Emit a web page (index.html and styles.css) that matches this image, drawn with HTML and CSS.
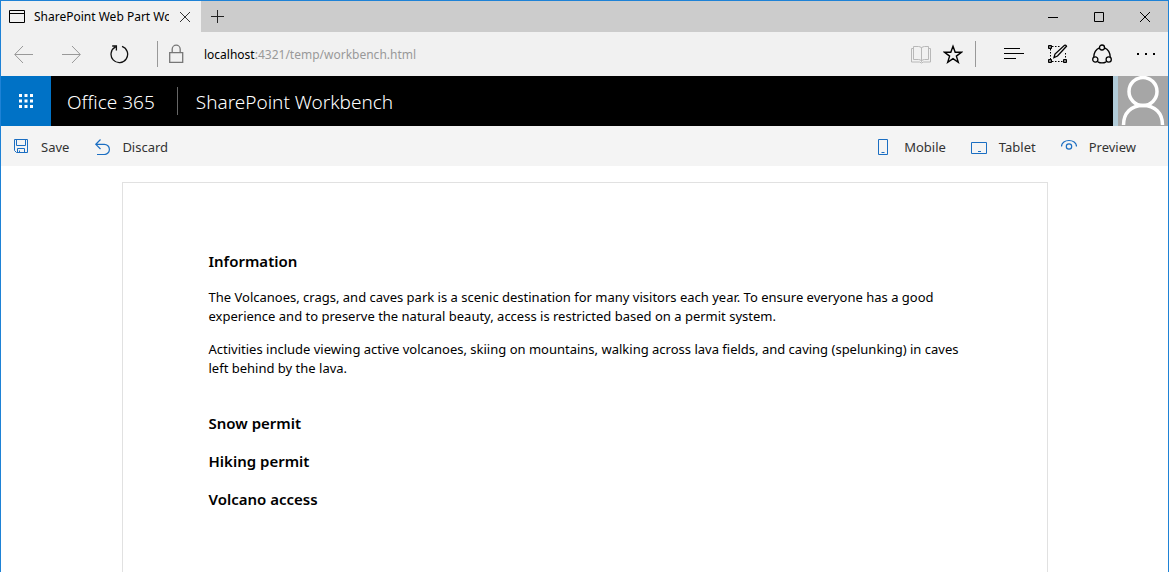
FILE: index.html
```html
<!DOCTYPE html>
<html lang="en">
<head>
<meta charset="utf-8">
<title>SharePoint Web Part Workbench</title>
<link rel="stylesheet" href="styles.css">
</head>
<body>
<div class="window">
  <div class="tabs">
    <div class="tab">
      <svg class="tab-icon" width="16" height="14" viewBox="0 0 16 14" fill="none" stroke="#000"><path d="M.5.5h15v12H.5zM.5 3.5h15"/></svg>
      <span class="tab-title">SharePoint Web Part Workbench</span>
      <button class="icon-button" aria-label="Close tab"><svg width="10" height="10" viewBox="0 0 10 10" fill="none" stroke="#333"><path d="M0 0l10 10M10 0L0 10"/></svg></button>
    </div>
    <button class="icon-button new-tab" aria-label="New tab"><svg width="13" height="13" viewBox="0 0 13 13" stroke="#222"><path d="M0 6.500h13M6.500 0v13"/></svg></button>
    <div class="window-controls">
      <button class="icon-button" aria-label="Minimize"><svg width="10" height="10" viewBox="0 0 10 10" stroke="#000"><path d="M0 5.500h10"/></svg></button>
      <button class="icon-button" aria-label="Maximize"><svg width="10" height="10" viewBox="0 0 10 10" fill="none" stroke="#000"><path d="M.5.5h9v9h-9z"/></svg></button>
      <button class="icon-button" aria-label="Close"><svg width="10" height="10" viewBox="0 0 10 10" stroke="#000"><path d="M0 0l10 10M10 0L0 10"/></svg></button>
    </div>
  </div>

  <div class="toolbar">
    <div class="nav">
      <button class="icon-button" aria-label="Back"><svg width="20" height="20" viewBox="0 0 20 20" fill="none" stroke="#999"><path d="M19 10.500H1M9 2L.700 10.500 9 19"/></svg></button>
      <button class="icon-button" aria-label="Forward"><svg width="20" height="20" viewBox="0 0 20 20" fill="none" stroke="#999"><path d="M0 10.500h18M10 2l8.300 8.500L10 19"/></svg></button>
      <button class="icon-button" aria-label="Refresh"><svg width="20" height="20" viewBox="0 0 20 20" fill="none" stroke="#111" stroke-width="1.300"><path d="M12 2.400a8.300 8.300 0 1 1-6.500.5M2.200 2h4.200v4.400"/></svg></button>
    </div>
    <span class="divider"></span>
    <svg class="lock" width="16" height="20" viewBox="0 0 16 20" fill="none" stroke="#777" stroke-width="1.300"><path d="M1.700 8.700h13v9.700h-13zM4.200 8.500V5.200a4 4 0 0 1 8 0v3.300"/></svg>
    <div class="address">localhost<span class="address-path">:4321/temp/workbench.html</span></div>
    <div class="page-tools">
      <button class="icon-button" aria-label="Reading view"><svg width="20" height="20" viewBox="0 0 20 20" fill="none" stroke="#b8b8b8"><path d="M10.500 3.500v14M2.500 2.500h5q3 0 3 2 0-2 3-2h4v13h-4q-3 0-3 2 0-2-3-2h-5zM2.500 4.500h-2v13.500h8l2 1 2-1h7V4.500h-2"/></svg></button>
      <button class="icon-button" aria-label="Add to favorites"><svg width="20" height="20" viewBox="0 0 20 20" fill="none" stroke="#000" stroke-width="1.400"><path d="M10 2.300l2.200 6h6.200l-5 3.800 1.900 6.200L10 14.600l-5.300 3.700 1.900-6.200-5-3.800h6.200z"/></svg></button>
    </div>
    <span class="divider"></span>
    <div class="browser-tools">
      <button class="icon-button" aria-label="Hub"><svg width="20" height="20" viewBox="0 0 20 20" stroke="#000"><path d="M0 4.500h16M0 9.500h20M0 14.500h12"/></svg></button>
      <button class="icon-button" aria-label="Make a web note"><svg width="20" height="20" viewBox="0 0 20 20" fill="none" stroke="#000"><path d="M4 2.500h9M2.500 5v11M4 17.500h12M17.500 9v7" stroke-dasharray="1.500 1.500"/><path d="M.5 1.500h3v3h-3zM.5 15.500h3v3h-3zM15.500 15.500h3v3h-3z" fill="#777"/><path d="M6 13.500l1-3.500 9.500-8.700q1.500-.5 2 1L9.500 12z" stroke-width="1.300"/></svg></button>
      <button class="icon-button" aria-label="Share"><svg width="20" height="20" viewBox="0 0 20 20" fill="none" stroke="#000" stroke-width="1.300"><circle cx="10" cy="3.500" r="2.500"/><circle cx="3.300" cy="15.500" r="2.600"/><circle cx="16.700" cy="15.500" r="2.600"/><path d="M7.500 3.800Q2 6 1.800 13M12.500 3.800Q18 6 18.200 13M5.800 17.800q4.200 2.200 8.400 0"/></svg></button>
      <button class="icon-button" aria-label="More"><svg width="20" height="20" viewBox="0 0 20 20"><path d="M1 9h2v2H1zM9 9h2v2H9zM17 9h2v2h-2z"/></svg></button>
    </div>
  </div>

  <header class="suite">
    <button class="launcher" aria-label="App launcher"><svg width="14" height="14" viewBox="0 0 14 14" fill="#fff"><path d="M0 0h3v3H0zM5.500 0h3v3h-3zM11 0h3v3h-3zM0 5.500h3v3H0zM5.500 5.500h3v3h-3zM11 5.500h3v3h-3zM0 11h3v3H0zM5.500 11h3v3h-3zM11 11h3v3h-3z"/></svg></button>
    <a class="brand" href="#">Office 365</a>
    <span class="app-name">SharePoint Workbench</span>
    <button class="avatar" aria-label="Account"><svg width="50" height="50" viewBox="0 0 50 50" fill="none" stroke="#fff" stroke-width="3.500"><circle cx="25" cy="15.500" r="14"/><path d="M5.500 49C5.500 37 13 29.500 25 29.500S44.500 37 44.500 49"/></svg></button>
  </header>

  <div class="commands">
    <button class="command"><svg width="16" height="16" viewBox="0 0 16 16" fill="none" stroke="#1b6ec2"><path d="M1.500.5h13v13H3.500l-2-2zM3.500.5v6h9v-6M4.500 13.500v-4h7v4M6.500 11.500v2"/></svg>Save</button>
    <button class="command"><svg width="16" height="16" viewBox="0 0 16 16" fill="none" stroke="#1b6ec2" stroke-width="1.200"><path d="M6.500.5L1.800 5.300 6.500 10M2 5.300h8.300a5 5 0 0 1 0 10.200H3"/></svg>Discard</button>
    <span class="spacer"></span>
    <button class="command"><svg width="16" height="16" viewBox="0 0 16 16" fill="none" stroke="#1b6ec2"><path d="M2.500.5h9v15h-9zM5.500 13.500h3"/></svg>Mobile</button>
    <button class="command"><svg width="16" height="16" viewBox="0 0 16 16" fill="none" stroke="#1b6ec2"><path d="M.5 3.500h15v11H.5zM7 12.500h3"/></svg>Tablet</button>
    <button class="command"><svg width="16" height="16" viewBox="0 0 16 16" fill="none" stroke="#1b6ec2" stroke-width="1.200"><path d="M.5 7.500c0-8 15-8 15 0"/><circle cx="8" cy="7.500" r="2.700"/></svg>Preview</button>
  </div>

  <main class="canvas">
    <article class="page">
      <h2>Information</h2>
      <p>The Volcanoes, crags, and caves park is a scenic destination for many visitors each year. To ensure everyone has a good experience and to preserve the natural beauty, access is restricted based on a permit system.</p>
      <p>Activities include viewing active volcanoes, skiing on mountains, walking across lava fields, and caving (spelunking) in caves left behind by the lava.</p>
      <section class="permits">
        <h2>Snow permit</h2>
        <h2>Hiking permit</h2>
        <h2>Volcano access</h2>
      </section>
    </article>
  </main>
</div>
</body>
</html>
```
FILE: styles.css
```css
* { box-sizing: border-box; }
body {
  margin: 0;
  font-family: "Noto Sans", "Open Sans", sans-serif;
  font-size: 13px;
  color: #000;
  background: #fff;
}
button {
  padding: 0;
  border: 0;
  background: none;
  font: inherit;
  color: inherit;
}
svg { display: block; flex: none; }

.window {
  display: flex;
  flex-direction: column;
  min-height: 100vh;
  border: 1px solid #1e82d6;
  border-bottom: 0;
}
.icon-button { display: grid; place-items: center; flex: none; }

.tabs { display: flex; height: 31px; background: #ccc; }
.tab {
  display: flex;
  align-items: center;
  width: 200px;
  padding: 0 11px 0 8px;
  background: #f1f1f1;
}
.tab-title {
  flex: 1;
  margin: 0 11px 0 9px;
  overflow: hidden;
  white-space: nowrap;
  font-size: 12px;
}
.new-tab { width: 33px; }
.window-controls { display: flex; gap: 36px; margin-left: auto; padding-right: 18px; }

.toolbar {
  display: flex;
  align-items: center;
  height: 44px;
  padding: 0 12px 0 13px;
  background: #f1f1f1;
}
.nav { display: flex; gap: 28px; margin-right: 27px; }
.divider { width: 1px; height: 26px; background: #999; }
.lock { margin: 0 20px 0 10px; }
.address { flex: 1; font-size: 12px; }
.address-path { color: #999; }
.page-tools { display: flex; gap: 12px; margin-right: 12px; }
.browser-tools { display: flex; gap: 24px; margin-left: 28px; }

.suite {
  display: flex;
  align-items: center;
  height: 50px;
  background: #000;
  color: #fff;
  font-size: 19px;
  font-weight: 300;
  line-height: 26px;
}
.launcher {
  display: grid;
  place-items: center;
  width: 50px;
  height: 50px;
  background: #0072c6;
}
.brand {
  padding: 2px 22px 0 16px;
  border-right: 1px solid #666;
  color: inherit;
  text-decoration: none;
}
.app-name { padding: 2px 0 0 18px; }
.avatar {
  margin-left: auto;
  border-left: 5px solid #b1cbd8;
  background: #a6a6a6;
}

.commands {
  display: flex;
  gap: 25px;
  height: 40px;
  padding: 1px 32px 0 12px;
  background: #f4f4f4;
  color: #333;
}
.command { display: flex; align-items: center; gap: 12px; }
.spacer { flex: 1; }

.canvas { display: flex; flex: 1; padding: 16px 120px 0; }
.page {
  flex: 1;
  max-width: 926px;
  margin: 0 auto;
  padding: 67px 72px 52px 86px;
  border: 1px solid #e1e1e1;
  border-bottom: 0;
}
h2 {
  margin: 0 0 16px;
  font-size: 15px;
  font-weight: 600;
  line-height: 22px;
}
p { margin: 0 0 14px; line-height: 19px; }
.permits { padding-top: 20px; }
```
